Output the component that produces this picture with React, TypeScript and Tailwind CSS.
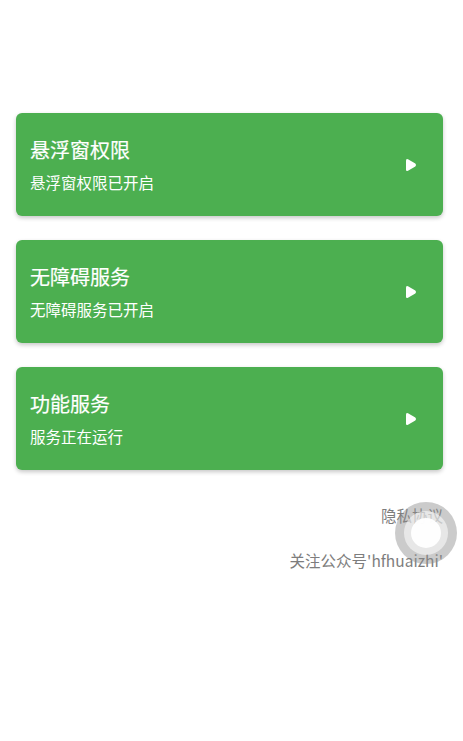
import React from 'react';

const cards = [
  { title: '悬浮窗权限', sub: '悬浮窗权限已开启' },
  { title: '无障碍服务', sub: '无障碍服务已开启' },
  { title: '功能服务', sub: '服务正在运行' },
];

const Arrow = () => (
  <svg width="12" height="14" viewBox="0 0 12 14">
    <path
      d="M3 1.2 L10.3 5.6 Q12 7 10.3 8.4 L3 12.8 Q1 13.8 1 11.5 L1 2.5 Q1 0.2 3 1.2 Z"
      fill="#ffffff"
    />
  </svg>
);

export default function App() {
  return (
    <div
      className="relative w-[463px] h-[741px] bg-white overflow-hidden"
      style={{ fontFamily: '"Noto Sans CJK SC", "Noto Sans", sans-serif' }}
    >
      <div className="flex flex-col gap-[24px] pl-[16px] pr-[20px] pt-[113px]">
        {cards.map(c => (
          <div
            key={c.title}
            className="flex items-center justify-between h-[103px] rounded-[6px] bg-[#4caf50] pl-[14px] pr-[26px] shadow-[0_2px_4px_rgba(0,0,0,0.22)]"
          >
            <div className="flex flex-col">
              <span className="text-[20px] leading-[26px] font-normal text-white [-webkit-text-stroke:0.2px_white]">
                {c.title}
              </span>
              <span className="mt-[9px] text-[15.5px] leading-[20px] text-white">{c.sub}</span>
            </div>
            <Arrow />
          </div>
        ))}
      </div>
      <div className="flex flex-col items-end pr-[20px] pt-[34px] text-[#7d7d7d] text-[15.5px]">
        <span className="leading-[22px]">隐私协议</span>
        <span className="mt-[23px] leading-[22px]">关注公众号'hfhuaizhi'</span>
      </div>
      <div className="absolute left-[395px] top-[502px] w-[62px] h-[62px] rounded-full bg-[rgba(140,140,140,0.45)] flex items-center justify-center">
        <div className="w-[44px] h-[44px] rounded-full bg-[rgba(255,255,255,0.55)] flex items-center justify-center">
          <div className="w-[30px] h-[30px] rounded-full bg-[rgba(255,255,255,0.95)]" />
        </div>
      </div>
    </div>
  );
}
